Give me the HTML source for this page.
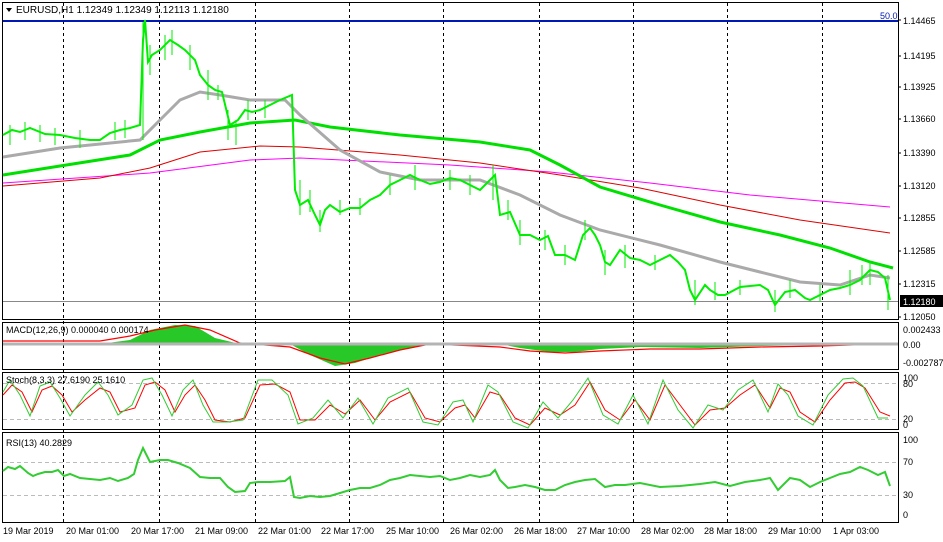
<!DOCTYPE html>
<html><head><meta charset="utf-8"><style>
body{margin:0;background:#fff;}
svg{display:block;font-family:"Liberation Sans",sans-serif;font-size:10px;}
</style></head><body>
<svg width="943" height="542" viewBox="0 0 943 542" xmlns="http://www.w3.org/2000/svg">
<rect width="943" height="542" fill="#fff"/>
<g fill="none" stroke="#000" stroke-width="1">
<rect x="2.5" y="2.5" width="896" height="317"/>
<rect x="2.5" y="322.5" width="896" height="47"/>
<rect x="2.5" y="372.5" width="896" height="57"/>
<rect x="2.5" y="432.5" width="896" height="90"/>
</g>
<g stroke="#000" stroke-dasharray="3,3" stroke-width="1">
<path d="M63.5 3V523M159.5 3V523M255.5 3V523M349.5 3V523M443.5 3V523M539.5 3V523M633.5 3V523M727.5 3V523M822.5 3V523"/>
</g>
<line x1="3" y1="21" x2="898" y2="21" stroke="#0018b4" stroke-width="2"/>
<text x="880" y="19" fill="#0018b4" font-size="9">50.0</text>
<line x1="3" y1="301.5" x2="898" y2="301.5" stroke="#888" stroke-width="1"/>
<polyline fill="none" stroke="#ff00ff" stroke-width="1" points="3,183 150,173 250,160 300,158 450,165 550,172 650,183 750,195 890,207"/>
<polyline fill="none" stroke="#e00000" stroke-width="1" points="3,186 100,178 150,168 200,152 260,146 300,147 400,155 480,163 560,175 640,188 720,205 800,220 890,233"/>
<polyline fill="none" stroke="#00e000" stroke-width="3" points="3,175 60,166 130,155 160,140 200,132 250,123 295,120 330,127 400,135 480,142 530,150 560,165 600,187 660,205 720,222 780,235 830,248 870,262 893,268"/>
<polyline fill="none" stroke="#aaa" stroke-width="3" points="3,157 60,148 140,140 160,120 180,100 200,92 220,95 250,100 285,100 300,115 340,150 380,172 420,180 480,180 520,195 560,215 600,230 660,245 720,262 760,272 800,282 840,285 870,275 890,278"/>
<polyline fill="none" stroke="#00ee00" stroke-width="2" points="3,135 12,130 20,132 30,128 45,134 60,135 75,138 90,140 100,140 110,133 120,130 130,128 140,125 143,40 145,20 148,62 152,55 160,50 170,40 178,45 185,50 195,60 200,75 208,85 215,90 222,92 230,125 238,120 245,110 252,112 260,110 270,105 280,100 292,95 295,190 300,205 308,200 315,215 320,225 325,210 330,205 340,212 350,208 360,208 370,200 380,195 390,185 400,180 410,175 420,180 430,184 440,182 450,178 460,180 470,185 480,190 488,182 495,175 500,215 510,212 520,235 530,235 540,240 548,236 555,255 565,255 575,260 583,235 590,228 595,235 600,245 605,262 610,265 620,250 630,258 640,260 650,265 660,260 670,255 678,262 685,270 690,290 695,300 705,285 710,290 718,295 725,295 740,287 760,285 768,290 775,305 785,292 795,290 805,298 810,300 820,295 830,290 840,288 850,285 860,280 870,270 878,272 885,278 890,300"/>
<g stroke="#00ee00" stroke-width="1">
<path d="M10 125V145M25 122V140M40 125V142M55 128V145M80 130V148M115 122V140M125 120V138M143 22V140M150 45V75M165 35V60M172 30V55M190 45V70M208 70V100M218 85V100M228 110V140M236 120V145M248 100V120M265 100V118M300 180V215M310 190V212M320 210V232M340 200V215M360 198V215M390 175V195M415 165V190M450 170V190M470 175V195M493 165V200M508 200V220M520 220V245M545 230V250M565 245V265M585 220V240M605 250V275M625 245V268M655 255V270M695 280V305M715 282V300M740 280V295M775 290V312M790 280V298M820 285V302M850 270V295M862 265V285M870 262V285M888 275V310"/>
</g>
<path d="M3 344 L100 344 L130 340 L150 330 L175 325 L195 326 L215 338 L240 344 L290 344 L310 355 L335 366 L355 363 L380 355 L410 348 L430 344 L500 344 L520 348 L550 352 L575 352 L600 349 L640 347 L700 348 L760 346 L820 345 L860 344 L860 344 Z" fill="#28c828"/>
<polyline fill="none" stroke="#ff0000" stroke-width="1.2" points="3,341 100,341 130,336 155,330 185,325 210,330 240,343 290,347 320,358 345,364 370,358 400,350 430,344 500,347 530,351 565,353 600,351 650,349 700,349 760,347 820,346 880,344"/>
<line x1="3" y1="344" x2="898" y2="344" stroke="#b4b4b4" stroke-width="3"/>
<text x="6" y="333" font-size="9">MACD(12,26,9) 0.000040 0.000174</text>
<g stroke="#bbb" stroke-dasharray="4,3"><line x1="3" y1="383.5" x2="898" y2="383.5"/><line x1="3" y1="419.5" x2="898" y2="419.5"/></g>
<polyline fill="none" stroke="#ff0000" stroke-width="1" points="3,395 12,385 22,392 32,412 42,390 52,386 62,395 72,412 85,400 100,388 110,392 120,412 135,408 145,385 155,382 165,390 175,412 185,395 195,385 205,400 215,420 230,422 245,418 260,385 275,384 290,392 300,420 315,420 330,405 345,414 360,400 375,420 390,402 410,392 425,418 440,422 455,408 465,405 475,418 490,392 500,395 515,418 530,425 545,408 560,415 575,405 590,382 605,410 620,420 635,400 650,420 665,385 680,405 695,425 710,410 725,408 740,395 755,385 770,408 780,388 790,392 800,412 815,422 830,400 845,383 855,382 865,388 880,412 890,416"/>
<polyline fill="none" stroke="#33cc33" stroke-width="1" points="3,392 10,380 20,395 30,416 40,386 50,382 60,398 70,416 85,395 98,382 108,395 118,415 132,405 143,380 152,378 162,395 172,416 183,390 193,380 203,405 213,422 228,422 243,420 258,380 272,380 288,395 298,424 313,418 328,400 343,418 358,398 373,424 388,398 408,388 423,422 438,425 453,402 463,400 473,422 488,385 498,392 513,422 528,428 543,402 558,418 573,400 588,378 603,415 618,424 633,395 648,424 663,380 678,410 693,428 708,405 723,410 738,390 753,380 768,412 778,384 788,395 798,416 813,425 828,395 843,379 853,378 863,386 878,418 888,418"/>
<text x="6" y="383" font-size="9">Stoch(8,3,3) 27.6190 25.1610</text>
<g stroke="#bbb" stroke-dasharray="4,3"><line x1="3" y1="462.5" x2="898" y2="462.5"/><line x1="3" y1="495.5" x2="898" y2="495.5"/></g>
<polyline fill="none" stroke="#33cc33" stroke-width="2" points="3,471 8,467 15,469 20,466 28,473 33,476 38,474 45,472 52,472 58,470 64,476 70,474 80,478 90,479 100,480 110,478 118,481 128,478 134,474 138,460 143,448 150,462 160,460 168,460 178,463 190,468 200,477 210,478 220,478 228,487 235,492 245,491 250,483 258,482 270,482 285,481 290,477 294,497 300,498 310,496 320,497 330,496 340,493 350,490 360,488 370,488 380,485 390,480 400,478 410,475 430,477 440,476 450,480 460,478 470,475 480,477 490,475 495,470 500,480 508,488 515,487 525,485 535,487 545,490 555,490 565,485 575,482 585,480 595,479 605,487 615,485 625,485 640,483 660,487 680,486 700,484 715,482 730,486 745,482 760,480 770,478 778,490 790,478 800,480 810,487 820,482 830,478 840,474 850,472 860,467 868,470 878,475 885,472 890,486"/>
<text x="6" y="446" font-size="9">RSI(13) 40.2829</text>
<path d="M6 8 L12 8 L9 12 Z" fill="#000"/>
<text x="16" y="13" font-size="10">EURUSD,H1  1.12349 1.12349 1.12113 1.12180</text>
<g font-size="9" fill="#000">
<text x="903" y="24">1.14465</text>
<text x="903" y="59">1.14195</text>
<text x="903" y="90">1.13925</text>
<text x="903" y="122">1.13660</text>
<text x="903" y="156">1.13390</text>
<text x="903" y="189">1.13120</text>
<text x="903" y="221">1.12855</text>
<text x="903" y="254">1.12585</text>
<text x="903" y="287">1.12315</text>
<text x="903" y="320">1.12050</text>
<rect x="900" y="295" width="43" height="12" fill="#000"/>
<text x="903" y="305" fill="#fff">1.12180</text>
<text x="903" y="333">0.002433</text>
<text x="903" y="348">0.00</text>
<text x="903" y="366">-0.002787</text>
<text x="903" y="381">100</text>
<text x="903" y="387">80</text>
<text x="903" y="422">20</text>
<text x="903" y="428">0</text>
<text x="903" y="443">100</text>
<text x="903" y="465">70</text>
<text x="903" y="498">30</text>
<text x="903" y="518">0</text>
</g>
<g stroke="#000"><path d="M898 20h3M898 56h3M898 87h3M898 119h3M898 153h3M898 186h3M898 218h3M898 251h3M898 284h3M898 317h3"/></g>
<g font-size="9" fill="#000">
<text x="3" y="534">19 Mar 2019</text>
<text x="66" y="534">20 Mar 01:00</text>
<text x="131" y="534">20 Mar 17:00</text>
<text x="195" y="534">21 Mar 09:00</text>
<text x="258" y="534">22 Mar 01:00</text>
<text x="321" y="534">22 Mar 17:00</text>
<text x="386" y="534">25 Mar 10:00</text>
<text x="450" y="534">26 Mar 02:00</text>
<text x="514" y="534">26 Mar 18:00</text>
<text x="577" y="534">27 Mar 10:00</text>
<text x="641" y="534">28 Mar 02:00</text>
<text x="704" y="534">28 Mar 18:00</text>
<text x="768" y="534">29 Mar 10:00</text>
<text x="833" y="534">1 Apr 03:00</text>
</g>
</svg>
</body></html>
